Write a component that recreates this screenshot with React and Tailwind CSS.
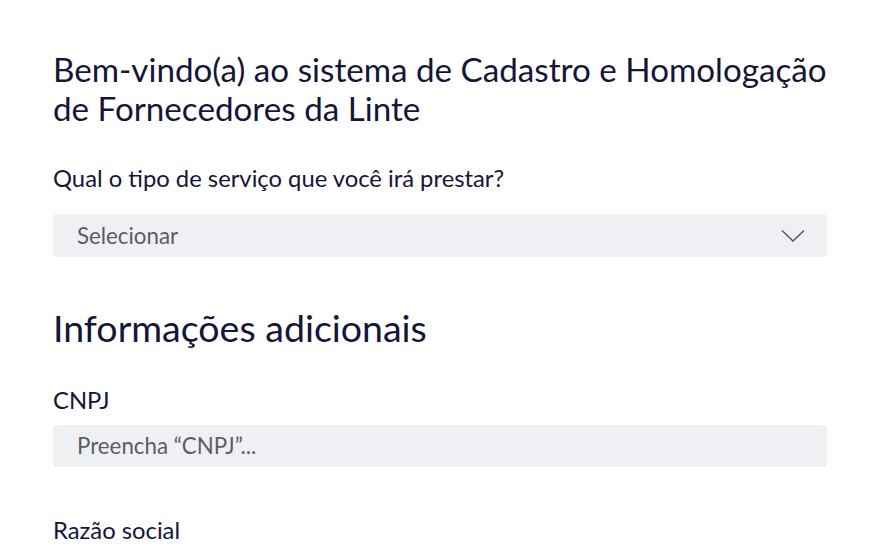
import React from "react";

export default function App() {
  return (
    <div className="w-[880px] h-[550px] overflow-hidden bg-white text-[#15153a]" style={{ fontFamily: "Lato, 'Noto Sans', sans-serif" }}>
      <div className="px-[53px] pt-[50px] flex flex-col">
        <h1 className="text-[33.2px] leading-[39px] font-normal">
          Bem-vindo(a) ao sistema de Cadastro e Homologação de Fornecedores da Linte
        </h1>
        <label className="mt-[36px] text-[23.8px] leading-[28px]">Qual o tipo de serviço que você irá prestar?</label>
        <div className="mt-[22px] h-[43px] rounded-[4px] bg-[#eff0f3] flex items-center justify-between pl-[24px] pr-[22px]">
          <span className="text-[22.3px] text-[#5c5c66]">Selecionar</span>
          <svg width="24" height="14" viewBox="0 0 24 14" fill="none" stroke="#55555f" strokeWidth="1.5">
            <path d="M1 1.5 L12 12 L23 1.5" />
          </svg>
        </div>
        <h2 className="mt-[49px] text-[37.5px] leading-[44px] font-normal">Informações adicionais</h2>
        <label className="mt-[36px] text-[23.8px] leading-[28px]">CNPJ</label>
        <div className="mt-[11px] h-[42px] rounded-[4px] bg-[#eff0f3] flex items-center pl-[24px]">
          <span className="text-[22.3px] text-[#5c5c66]">Preencha “CNPJ”...</span>
        </div>
        <label className="mt-[49px] text-[23.8px] leading-[28px]">Razão social</label>
      </div>
    </div>
  );
}
